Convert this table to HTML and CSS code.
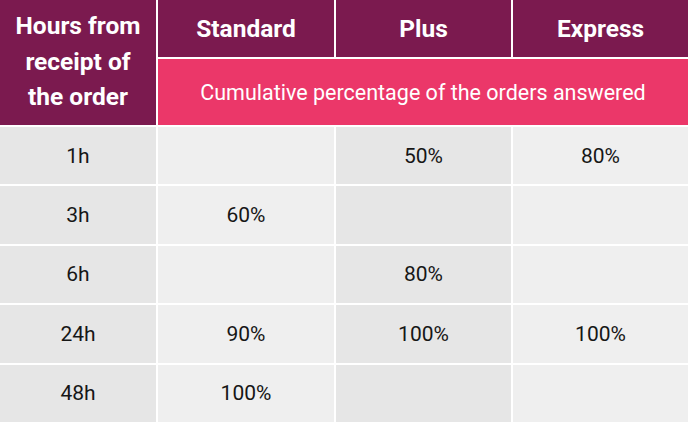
FILE: index.html
```html
<!DOCTYPE html>
<html>
<head>
<meta charset="utf-8">
<link rel="stylesheet" href="styles.css">
</head>
<body>
<div class="table">
  <div class="cell head hours">Hours from<br>receipt of<br>the order</div>
  <div class="cell head">Standard</div>
  <div class="cell head">Plus</div>
  <div class="cell head">Express</div>
  <div class="cell sub">Cumulative percentage of the orders answered</div>

  <div class="cell c1">1h</div><div class="cell c2"></div><div class="cell c3">50%</div><div class="cell c4">80%</div>
  <div class="cell c1">3h</div><div class="cell c2">60%</div><div class="cell c3"></div><div class="cell c4"></div>
  <div class="cell c1">6h</div><div class="cell c2"></div><div class="cell c3">80%</div><div class="cell c4"></div>
  <div class="cell c1">24h</div><div class="cell c2">90%</div><div class="cell c3">100%</div><div class="cell c4">100%</div>
  <div class="cell c1">48h</div><div class="cell c2">100%</div><div class="cell c3"></div><div class="cell c4"></div>
</div>
</body>
</html>
```
FILE: styles.css
```css
html, body {
  margin: 0;
  padding: 0;
  background: #ffffff;
}
.table {
  width: 688px;
  height: 422px;
  display: grid;
  grid-template-columns: 156px 176px 175px 1fr;
  grid-template-rows: 57px 66px repeat(5, 1fr);
  gap: 2px;
  background: #ffffff;
  font-family: Roboto, "Liberation Sans", sans-serif;
}
.cell {
  display: flex;
  align-items: center;
  justify-content: center;
  text-align: center;
  font-size: 21px;
  color: #161616;
}
.head {
  background: #7b1a4f;
  color: #ffffff;
  font-weight: 700;
  font-size: 24.5px;
}
.hours {
  grid-row: 1 / span 2;
  line-height: 35.5px;
  padding-bottom: 2px;
}
.sub {
  grid-column: 2 / span 3;
  background: #eb3769;
  color: #ffffff;
  font-size: 21.5px;
}
.c1 { background: #e6e6e6; }
.c2 { background: #efefef; }
.c3 { background: #e6e6e6; }
.c4 { background: #efefef; }
```
